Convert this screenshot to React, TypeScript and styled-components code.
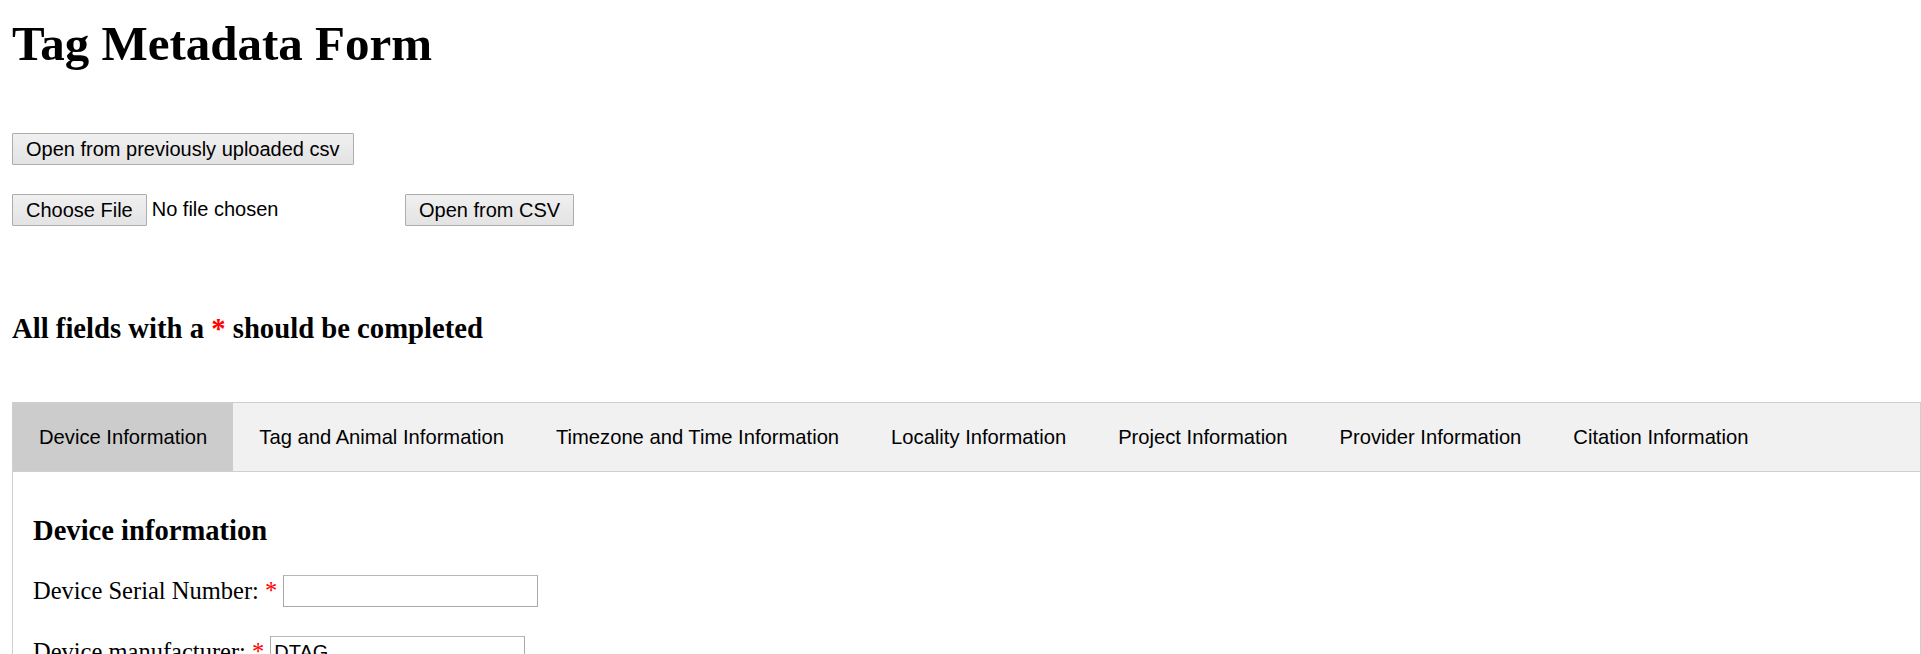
import React from "react";
import styled, { createGlobalStyle } from "styled-components";

const GlobalStyle = createGlobalStyle`
  html { overflow: hidden; }
  body {
    margin: 12px 0 0 12px;
    font-family: "Liberation Serif", "Times New Roman", serif;
    font-size: 24px;
    color: #000;
    background: #fff;
  }
  * { box-sizing: border-box; }
`;

const Page = styled.div`
  display: flex;
  flex-direction: column;
`;

const Title = styled.h1`
  font-size: 49px;
  font-weight: bold;
  line-height: 54px;
  margin: 5px 0 0 0;
`;

const Actions = styled.div`
  display: flex;
  flex-direction: column;
  gap: 29px;
  margin-top: 62px;
`;

const ButtonRow = styled.div`
  display: flex;
  align-items: center;
`;

const Button = styled.button`
  height: 32px;
  padding: 0 13px;
  font-family: "Liberation Sans", Arial, sans-serif;
  font-size: 20px;
  color: #000;
  background: linear-gradient(#f0f0f0, #e3e3e3);
  border: 1px solid #adadad;
  border-radius: 1px;
  line-height: 23px;
`;

const FileField = styled.div`
  display: flex;
  align-items: center;
  width: 393px;
`;

const FileStatus = styled.span`
  font-family: "Liberation Sans", Arial, sans-serif;
  font-size: 20px;
  margin-left: 5px;
  line-height: 23px;
  margin-top: -2px;
`;

const Notice = styled.h3`
  font-size: 28.7px;
  font-weight: bold;
  line-height: 31px;
  margin: 87px 0 0 0;
`;

const Required = styled.span`
  color: #f00;
`;

const Tabs = styled.div`
  display: flex;
  margin-top: 58px;
  border: 1px solid #cfcfcf;
  background: #f1f1f1;
`;

const TabButton = styled.button<{ $active?: boolean }>`
  height: 68px;
  padding: 0 26px;
  border: none;
  outline: none;
  font-family: "Liberation Sans", Arial, sans-serif;
  font-size: 20.2px;
  color: #000;
  background: ${(p) => (p.$active ? "#ccc" : "inherit")};
  cursor: pointer;
`;

const TabContent = styled.div`
  border: 1px solid #cfcfcf;
  border-top: none;
  padding: 9px 20px;
  min-height: 300px;
`;

const SectionTitle = styled.h3`
  font-size: 28.6px;
  font-weight: bold;
  line-height: 31px;
  margin: 34px 0 29px 0;
`;

const FieldRow = styled.div`
  display: flex;
  align-items: center;
  height: 32px;
  margin-bottom: 29px;
`;

const Label = styled.label`
  font-size: 24.5px;
  line-height: 28px;
  white-space: pre;
`;

const TextInput = styled.input`
  width: 255px;
  height: 32px;
  margin-left: 6px;
  padding: 1px 3px;
  font-family: "Liberation Sans", Arial, sans-serif;
  font-size: 20px;
  color: #000;
  border: 1px solid #a9a9a9;
  border-top-color: #b8b8b8;
  background: #fff;
`;

const tabs = [
  "Device Information",
  "Tag and Animal Information",
  "Timezone and Time Information",
  "Locality Information",
  "Project Information",
  "Provider Information",
  "Citation Information",
];

export default function App() {
  return (
    <>
      <GlobalStyle />
      <Page>
        <Title>Tag Metadata Form</Title>
        <Actions>
          <ButtonRow>
            <Button>Open from previously uploaded csv</Button>
          </ButtonRow>
          <ButtonRow>
            <FileField>
              <Button>Choose File</Button>
              <FileStatus>No file chosen</FileStatus>
            </FileField>
            <Button>Open from CSV</Button>
          </ButtonRow>
        </Actions>
        <Notice>
          All fields with a <Required>*</Required> should be completed
        </Notice>
        <Tabs>
          {tabs.map((t, i) => (
            <TabButton key={t} $active={i === 0}>
              {t}
            </TabButton>
          ))}
        </Tabs>
        <TabContent>
          <SectionTitle>Device information</SectionTitle>
          <FieldRow>
            <Label>
              Device Serial Number: <Required>*</Required>
            </Label>
            <TextInput defaultValue="" />
          </FieldRow>
          <FieldRow>
            <Label>
              Device manufacturer: <Required>*</Required>
            </Label>
            <TextInput defaultValue="DTAG" />
          </FieldRow>
        </TabContent>
      </Page>
    </>
  );
}
